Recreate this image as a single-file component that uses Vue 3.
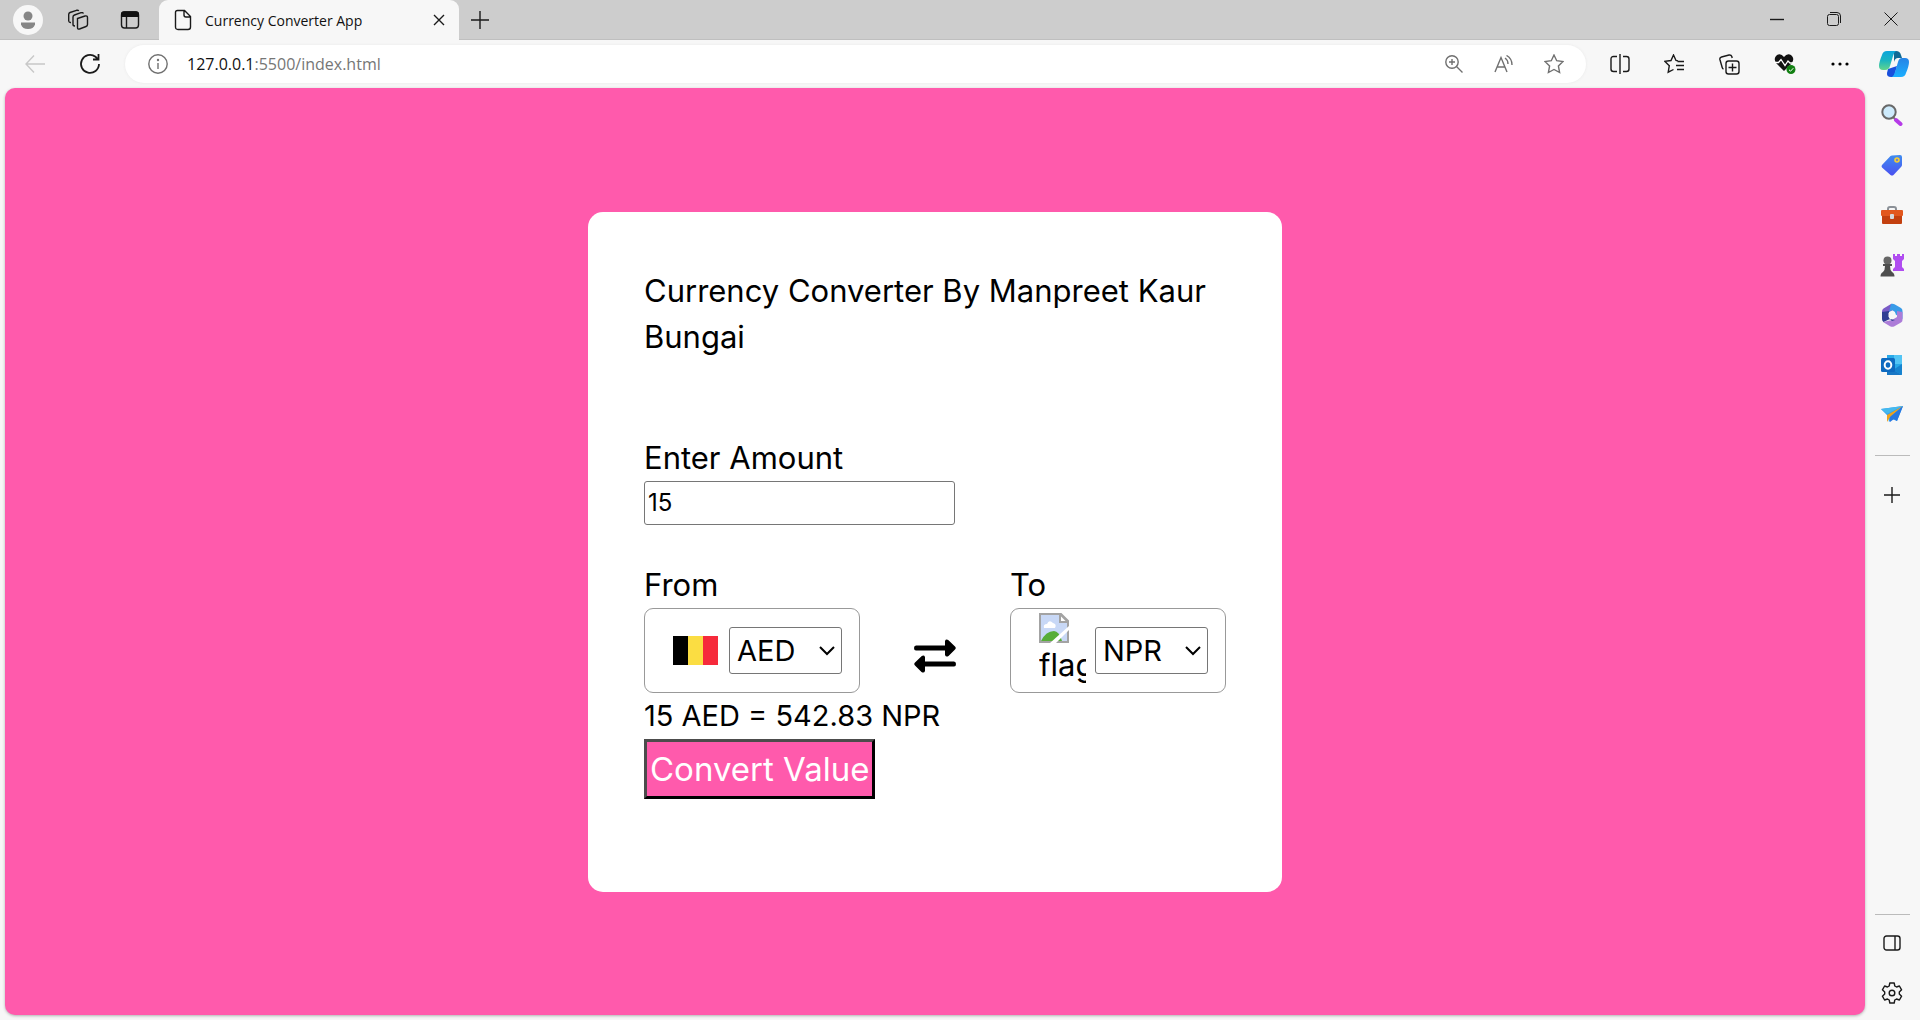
<script setup>
import { ref } from 'vue'

const amount = ref('15')
const from = ref('AED')
const to = ref('NPR')
const currencies = ['AED', 'NPR', 'USD', 'INR', 'EUR']
</script>

<template>
  <div class="browser">
    <header class="tabs">
      <button class="tool avatar" aria-label="Profile">
        <svg width="30" height="30" viewBox="0 0 30 30"><circle cx="15" cy="15" r="15" fill="#f7f7f7" /><circle cx="15" cy="11" r="4.5" fill="#868686" /><path d="M8 17.5h14v2q-1.500 4.500-7 4.500t-7-4.500z" fill="#868686" /></svg>
      </button>
      <button class="tool workspaces" aria-label="Workspaces">
        <svg class="line" width="22" height="22" viewBox="0 0 22 22"><path d="M10.500 9.500l7.500-2.500q2.500-.5 2.500 1.500v7q0 1.500-1.500 2l-6.500 2.500q-2 .5-2-1.500z" /><path d="M8 17q-2 0-2-1.500V8q0-1.500 1.500-2l6.500-2.300q2-.5 2.300 1" /><path d="M4 13.500q-2 .3-2.300-1.500V5.500Q1.700 4 3 3.500l6.500-2.200q1.700-.4 2.200.7" /></svg>
      </button>
      <button class="tool actions" aria-label="Tab actions">
        <svg class="line" width="20" height="20" viewBox="0 0 20 20"><rect x="1.500" y="2" width="17" height="16" rx="3" /><path d="M1 7V4q0-2.700 3-2.700h12q3 0 3 2.700v3z" fill="#111" stroke="none" /><path d="M6.500 7v11" /></svg>
      </button>
      <div class="tab">
        <svg class="line" width="18" height="22" viewBox="0 0 18 22"><path d="M3.500 1.500h7l6 6V18q0 2.500-2.500 2.500H4Q1.500 20.500 1.500 18V3.500q0-2 2-2zM10 1.500v4.500q0 2 2 2h4.500" /></svg>
        <span class="tab-title">Currency Converter App</span>
        <button class="close" aria-label="Close tab"><svg class="line" width="12" height="12" viewBox="0 0 12 12"><path d="M1 1l10 10M11 1L1 11" /></svg></button>
      </div>
      <button class="tool new-tab" aria-label="New tab"><svg class="line" width="18" height="18" viewBox="0 0 18 18"><path d="M9 0v18M0 9h18" /></svg></button>
      <div class="window">
        <button class="tool" aria-label="Minimize"><svg class="line" width="14" height="14" viewBox="0 0 14 14"><path d="M0 7.500h14" /></svg></button>
        <button class="tool" aria-label="Restore"><svg class="line thin" width="14" height="14" viewBox="0 0 14 14"><rect x=".5" y="2.500" width="11" height="11" rx="2" /><path d="M3 .5h7q3.500 0 3.500 3.500v7" /></svg></button>
        <button class="tool" aria-label="Close window"><svg class="line thin" width="14" height="14" viewBox="0 0 14 14"><path d="M.5.5l13 13M13.500.5l-13 13" /></svg></button>
      </div>
    </header>

    <nav class="toolbar">
      <button class="tool back" aria-label="Back"><svg class="line pale" width="20" height="18" viewBox="0 0 20 18"><path d="M20 9H1M9 .5L1 9l8 8.500" /></svg></button>
      <button class="tool reload" aria-label="Reload"><svg class="line strong" width="22" height="22" viewBox="0 0 22 22"><path d="M20 11a9 9 0 1 1-3.500-7.200l2.500 2.500M19.500 1v5.500H14" /></svg></button>
      <div class="address">
        <button class="info" aria-label="Site information"><svg class="line muted" width="20" height="20" viewBox="0 0 20 20"><circle cx="10" cy="10" r="9.200" /><path d="M10 9v6" /><circle cx="10" cy="6" r=".5" /></svg></button>
        <a class="url" href="#"><span>127.0.0.1</span>:5500/index.html</a>
        <button class="tool" aria-label="Zoom"><svg class="line muted" width="18" height="18" viewBox="0 0 18 18"><circle cx="7" cy="7" r="6.200" /><path d="M11.500 11.500l6 6M4 7h6M7 4v6" /></svg></button>
        <button class="tool" aria-label="Read aloud"><svg class="line muted" width="20" height="18" viewBox="0 0 20 18"><path d="M1 17L7 2.500 13 17M3.200 12h7.600M11 3q3 2 3 6M12.500.500Q18 3.500 18 10" /></svg></button>
        <button class="tool" aria-label="Add to favorites"><svg class="line muted" width="20" height="20" viewBox="0 0 20 20"><path d="M10 1l2.700 5.700 6.300.9-4.600 4.300 1.200 6.600L10 15.500l-5.600 3 1.200-6.600L1 7.600l6.300-.9z" /></svg></button>
      </div>
      <div class="extras">
        <button class="tool" aria-label="Split screen"><svg class="line" width="20" height="20" viewBox="0 0 20 20"><path d="M7 2.500H3.500Q1 2.500 1 5v10q0 2.500 2.500 2.500H7M10 0v20M13 2.500h3.500Q19 2.500 19 5v10q0 2.500-2.500 2.500H13" /></svg></button>
        <button class="tool" aria-label="Favorites"><svg class="line" width="21" height="20" viewBox="0 0 21 20"><path d="M9.500 15.500l-5.300 2.700 1.100-6.500L1 7.400l6-.9L9.500 1 12 6.500l2 .4M13.500 7.500H20M12 11.500h8M13 15.500h7" /></svg></button>
        <button class="tool" aria-label="Collections"><svg class="line" width="21" height="21" viewBox="0 0 21 21"><path d="M4.500 15q-1-.3-1.300-1.500L.9 5.500Q.5 3.500 2.500 3L10 1q2.200-.3 2.800 1.500l.4 1.500" /><rect x="7" y="7" width="13" height="13" rx="2.500" /><path d="M13.500 9.500v8M9.500 13.500h8" /></svg></button>
        <button class="tool" aria-label="Browser essentials"><svg width="22" height="20" viewBox="0 0 22 20"><path d="M10 17L2 9Q-1 4 3 1q4-2 7 2 3-4 7-2 4 3 1 8z" fill="#111" /><path d="M0 8.500h4.500L7 5.500l4 6 3-4.500 2 2h5" fill="none" stroke="#fff" stroke-width="1.300" /><circle cx="17" cy="15.500" r="4.500" fill="#128012" /><path d="M15 15.800l1.500 1.400 2.800-3" fill="none" stroke="#fff" /></svg></button>
        <button class="tool" aria-label="Settings and more"><svg width="18" height="6" viewBox="0 0 18 6"><circle cx="2" cy="3" r="1.600" /><circle cx="9" cy="3" r="1.600" /><circle cx="16" cy="3" r="1.600" /></svg></button>
        <button class="tool copilot" aria-label="Copilot">
          <svg width="30" height="28" viewBox="0 0 30 28">
            <defs>
              <linearGradient id="ca" x1="0" y1="0" x2="0" y2="1"><stop stop-color="#0ba5dc" /><stop offset=".5" stop-color="#1bb5c1" /><stop offset="1" stop-color="#61d58c" /></linearGradient>
              <linearGradient id="cb" x1="0" y1="0" x2="0" y2="1"><stop stop-color="#2683e5" /><stop offset="1" stop-color="#1bafff" /></linearGradient>
            </defs>
            <path d="M15 1h2q4 0 5 4l1 3h-4q-3 0-4 4z" fill="#106a95" />
            <path d="M9 19l-1 4q-.5 4 4 4h3l3-11z" fill="#194fdc" />
            <path d="M8 1h9q-2 1-3 5l-3 10q-1 4-5 4H4q-4 0-4-4 0-4 3-11 1-4 5-4z" fill="url(#ca)" />
            <path d="M23 8h3q4 0 4 4 0 4-3 11-1 4-5 4h-9q2-1 3-5l3-10q1-4 4-4z" fill="url(#cb)" />
          </svg>
        </button>
      </div>
    </nav>

    <div class="body">
      <main class="page">
        <form class="card" @submit.prevent>
          <h1>Currency Converter By Manpreet Kaur Bungai</h1>
          <div class="amount">
            <label for="amount">Enter Amount</label>
            <input id="amount" v-model="amount" type="text" />
          </div>
          <div class="pair">
            <div class="side">
              <label for="from">From</label>
              <div class="box">
                <span class="flag">
                  <svg width="45" height="29" viewBox="0 0 45 29"><path d="M0 0h15v29H0z" /><path d="M15 0h15v29H15z" fill="#fbdd42" /><path d="M30 0h15v29H30z" fill="#f62a3b" /></svg>
                </span>
                <span class="pick">
                  <select id="from" v-model="from"><option v-for="c in currencies" :key="c">{{ c }}</option></select>
                  <svg class="arrow" width="16" height="10" viewBox="0 0 16 10"><path d="M1 1l7 7 7-7" /></svg>
                </span>
              </div>
            </div>
            <button class="swap" type="button" aria-label="Swap currencies">
              <svg width="42" height="34" viewBox="0 0 42 34"><path d="M2 6.500h29V2q1-2.500 3.500-.8l6.500 6.300q1.500 1.500 0 3L34.500 17Q32 18.500 31 16v-4.500H2Q0 11.500 0 9t2-2.500zM40 22.500H11V18q-1-2.500-3.500-.8L1 23.500q-1.500 1.500 0 3L7.500 33q2.500 1.500 3.500-1v-4.500h29q2 0 2-2.500t-2-2.500z" /></svg>
            </button>
            <div class="side">
              <label for="to">To</label>
              <div class="box">
                <span class="flag missing">
                  <svg width="30" height="30" viewBox="0 0 30 30"><path d="M1 1h21l7 7v21H1z" fill="#c8d8f6" stroke="#a3a3a3" stroke-width="2" /><path d="M5 15q-1-4 3-4 2-5 6-1 4 1 2 5z" fill="#fff" /><path d="M2 28q5-10 13-10 5 0 8 10z" fill="#57ad38" /><path d="M30 13v4L17 30h-6z" fill="#fff" /><path d="M21 1v8h8z" fill="#fff" stroke="#a3a3a3" stroke-width="2" /></svg>
                  <span>flag</span>
                </span>
                <span class="pick">
                  <select id="to" v-model="to"><option v-for="c in currencies" :key="c">{{ c }}</option></select>
                  <svg class="arrow" width="16" height="10" viewBox="0 0 16 10"><path d="M1 1l7 7 7-7" /></svg>
                </span>
              </div>
            </div>
          </div>
          <p class="result">15 AED = 542.83 NPR</p>
          <button class="convert" type="submit">Convert Value</button>
        </form>
      </main>

      <aside class="rail">
        <button class="app" aria-label="Search"><svg width="22" height="22" viewBox="0 0 22 22"><path d="M12.500 13.500l3 3" stroke="#777" stroke-width="2" /><path d="M15 16l4.500 4" stroke="#b63be8" stroke-width="4" stroke-linecap="round" /><circle cx="8" cy="8" r="6.700" fill="#cdeafb" stroke="#686868" stroke-width="2" /></svg></button>
        <button class="app" aria-label="Shopping"><svg width="22" height="22" viewBox="0 0 22 22"><defs><linearGradient id="tg" x1="0" y1="0" x2="0" y2="1"><stop stop-color="#3f8df0" /><stop offset="1" stop-color="#4a50f0" /></linearGradient></defs><path d="M11 1.500l8-.5q2 0 2 2v8q0 1-1 2l-7.500 8q-1.500 1-3 0L1 13.500q-1-1.500 0-2.500l8.500-9z" fill="url(#tg)" /><circle cx="16" cy="6" r="2" fill="#7a86c4" stroke="#f7cf32" stroke-width="1.600" /></svg></button>
        <button class="app" aria-label="Tools"><svg width="22" height="20" viewBox="0 0 22 20"><path d="M7 6V4q0-2 2-2h4q2 0 2 2v2" fill="none" stroke="#8b9097" stroke-width="2" /><rect y="5" width="22" height="6" rx="1" fill="#e2571d" /><path d="M1 11h20v7q0 1-1 1H2q-1 0-1-1z" fill="#c3400f" /><rect x="9" y="9" width="4" height="5" rx="1" fill="#d5d8dc" /></svg></button>
        <button class="app" aria-label="Games"><svg width="24" height="24" viewBox="0 0 24 24"><path d="M13 1h2v2h2V1h3v2h2V1h2v5l-2 2v6l2 2v2H13v-2l2-2V8l-2-2z" fill="#b04df0" /><circle cx="7.500" cy="7.500" r="4" fill="#666" /><path d="M3 11h9v2h-2q0 4 2 6 2.500 1 2.500 4.500H.5Q.5 20 3 19q2-2 2-6H3z" fill="#4e4e4e" /></svg></button>
        <button class="app" aria-label="Microsoft 365"><svg width="22" height="24" viewBox="0 0 22 24"><path d="M10 1L2.500 5.500Q1 6.500 1 8.500v8l7-2.500V9l8-4-4-3.500Q11 .5 10 1z" fill="#795bc7" /><path d="M10 1q2-.8 3.500.3L20 5q1.500 1 1.500 3v8L14 11V9l-3-2-3 2 2-8z" fill="#399be8" /><path d="M21.500 9v8q0 1.500-1.500 2.500l-7 4q-2 .8-4-.3L2 19l9-2 5-3V8z" fill="#ac7cd8" /><path d="M1 9v7q0 2 1.500 3L9 16l5 1-3 1-3-3V8z" fill="#303e94" /><path d="M11 8l3.500 2v4L11 16l-3.500-2v-4z" fill="#f7f7f7" /></svg></button>
        <button class="app" aria-label="Outlook"><svg width="22" height="22" viewBox="0 0 22 22"><path d="M6 1h14q1 0 1 1v18q0 1-1 1H6z" fill="#29a9e8" /><path d="M13 1h7q1 0 1 1v8h-8z" fill="#52c5f5" /><path d="M6 12l15 9H6z" fill="#1877c5" /><path d="M21 10v11l-9-5z" fill="#1683cf" /><rect y="4" width="14" height="14" rx="1.500" fill="#0e6ac0" /><ellipse cx="7" cy="11" rx="3.300" ry="3.700" fill="none" stroke="#fff" stroke-width="2" /></svg></button>
        <button class="app" aria-label="Drop"><svg width="22" height="20" viewBox="0 0 22 20"><path d="M0 4l22-3-6 15-5-2-3 3-1-6z" fill="#2f9cf0" /><path d="M0 4l22-3L6 9z" fill="#45b9ee" /><path d="M22 1L6 10v7l3-5z" fill="#eea21d" /><path d="M22 1l-6 15-3-2-4 3v-5z" fill="#2777e2" /></svg></button>
        <hr />
        <button class="app plus" aria-label="Customize"><svg class="line" width="16" height="16" viewBox="0 0 16 16"><path d="M8 0v16M0 8h16" /></svg></button>
        <hr class="lower" />
        <button class="app" aria-label="Toggle sidebar"><svg class="line" width="18" height="16" viewBox="0 0 18 16"><rect x="1" y="1" width="16" height="14" rx="2.500" /><path d="M12 1v14" /></svg></button>
        <button class="app" aria-label="Settings"><svg class="line" width="22" height="22" viewBox="0 0 22 22"><path d="M8.800 1h4.400l.6 3 1.700 1 2.900-1 2.200 3.800L18.300 10v2l2.300 2.200-2.200 3.800-2.900-1-1.700 1-.6 3H8.800l-.6-3-1.700-1-2.900 1-2.200-3.800L3.700 12v-2L1.400 7.800 3.600 4l2.900 1 1.700-1z" stroke-linejoin="round" /><circle cx="11" cy="11" r="2.800" /></svg></button>
      </aside>
    </div>
  </div>
</template>

<style>
body { margin: 0; }
</style>

<style scoped>
* { box-sizing: border-box; }
button { padding: 0; border: 0; background: none; color: inherit; font: inherit; }
svg { display: block; flex: none; }
.browser { display: flex; flex-direction: column; min-height: 100vh; background: #f7f7f7; color: #111; font-family: "Open Sans", "Noto Sans", sans-serif; }
.line { fill: none; stroke: #1a1a1a; stroke-width: 1.400; }
.thin { stroke-width: 1; }
.strong { stroke-width: 1.800; }
.muted { stroke: #707070; }
.pale { stroke: #c8c8c8; }
.tool { display: flex; flex: none; align-items: center; justify-content: center; }

.tabs { display: flex; align-items: center; height: 40px; background: #cdcdcd; box-shadow: inset 0 -1px #bfbfbf; }
.avatar { width: 56px; }
.workspaces { width: 44px; }
.actions { width: 59px; }
.tab { display: flex; align-items: center; width: 300px; height: 40px; padding: 0 14px 0 15px; border-radius: 9px 9px 0 0; background: #f7f7f7; }
.tab-title { flex: 1; margin-left: 13px; font-size: 14px; }
.new-tab { width: 42px; }
.window { display: flex; align-self: flex-start; margin: 0 1px 0 auto; }
.window .tool { width: 57px; height: 38px; }

.toolbar { display: flex; align-items: center; height: 48px; }
.back { width: 70px; }
.reload { width: 40px; }
.address { display: flex; flex: 1; align-items: center; height: 38px; margin-left: 15px; padding: 0 7px 0 23px; border-radius: 19px; background: #fff; box-shadow: 0 0 3px #e8e8e8; }
.address .tool { width: 50px; }
.url { flex: 1; margin-left: 19px; color: #767676; font-size: 16px; text-decoration: none; }
.url span { color: #111; }
.extras { display: flex; margin-left: 6px; }
.extras .tool { width: 55px; }
.extras .copilot { width: 53px; }

.body { display: flex; flex: 1; }
.page { display: flex; flex: 1; align-items: center; justify-content: center; margin: 0 0 5px 5px; border-radius: 10px; background: #ff5aac; box-shadow: 0 1px 3px #b0b0b0; }
.card { display: flex; flex-direction: column; align-items: flex-start; width: 694px; min-height: 680px; padding: 56px; border-radius: 15px; background: #fff; color: #000; font-family: Inter, "Open Sans", sans-serif; font-size: 31px; line-height: 46px; }
h1 { margin: 0; font-size: 31px; font-weight: 400; }
label { display: block; }
.amount { margin: 75px 0 37px; }
input { display: block; width: 311px; height: 44px; padding: 0 3px; border: 1px solid #767676; border-radius: 3px; background: #fff; color: #000; font-family: inherit; font-size: 24px; }
.pair { display: flex; align-items: flex-end; justify-content: space-between; width: 100%; }
.box { display: flex; align-items: center; justify-content: space-between; width: 216px; height: 85px; padding: 0 17px 0 28px; border: 1px solid #999; border-radius: 9px; }
.flag { width: 47px; overflow: hidden; }
.missing { height: 74px; }
.missing span { display: block; line-height: 44px; }
.pick { position: relative; }
select { display: block; width: 113px; height: 47px; padding: 0 7px; border: 1px solid #767676; border-radius: 3px; appearance: none; background: #fff; color: #000; font-family: inherit; font-size: 29px; }
.arrow { position: absolute; top: 19px; right: 7px; fill: none; stroke: #000; stroke-width: 2; pointer-events: none; }
.swap { margin-bottom: 20px; }
.result { margin: 0; font-size: 29px; }
.convert { height: 60px; padding: 0 3px; border: 3px solid; border-color: #4c4c4c #000 #000 #4c4c4c; background: #ff5aac; color: #fff; font-size: 33px; white-space: nowrap; }

.rail { display: flex; flex-direction: column; align-items: center; width: 55px; padding-right: 1px; }
.app { display: flex; flex: none; align-items: center; justify-content: center; width: 50px; height: 50px; }
.app:first-child { margin-top: 2px; }
hr { width: 35px; margin: 15px 0 14px; border: 0; border-top: 1px solid #bbb; }
.lower { margin: auto 0 3px; }
.app:last-child { margin-bottom: 2px; }
</style>
